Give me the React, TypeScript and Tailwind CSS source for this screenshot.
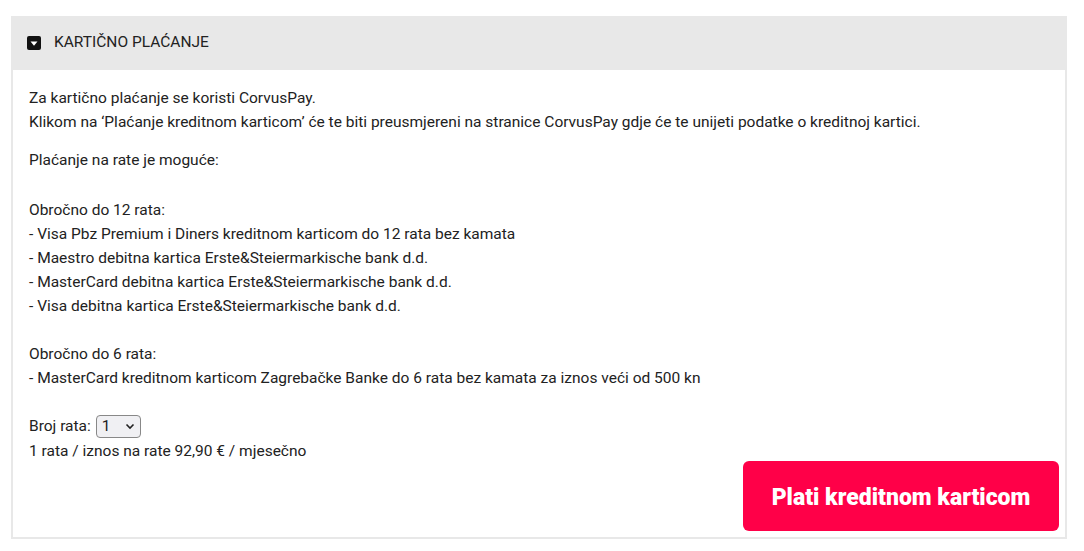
import React from "react";

export default function App() {
  return (
    <div className="w-[1084px] h-[551px] bg-white pt-4 px-[11px] text-[#222]" style={{ fontFamily: "Roboto, 'Noto Sans', sans-serif" }}>
      <div className="w-[1056px]">
        <div className="h-[54px] bg-[#e8e8e8] flex items-center pl-4">
          <div className="w-[14px] h-[14px] bg-[#111] rounded-[2px] flex items-center justify-center">
            <svg width="8" height="5" viewBox="0 0 8 5"><path d="M0.5 0.5 L7.5 0.5 L4 4.8 Z" fill="#fff" /></svg>
          </div>
          <span className="ml-[13px] text-[15.5px] uppercase text-[#222]">Kartično plaćanje</span>
        </div>
        <div className="border-2 border-t-0 border-[#e8e8e8] pl-4 pr-[6px] pt-[16px] pb-[6px] text-[15.5px] leading-[24px]">
          <p>Za kartično plaćanje se koristi CorvusPay.<br />Klikom na ‘Plaćanje kreditnom karticom’ će te biti preusmjereni na stranice CorvusPay gdje će te unijeti podatke o kreditnoj kartici.</p>
          <p className="mt-[14px]">Plaćanje na rate je moguće:</p>
          <p className="mt-[26px]">Obročno do 12 rata:<br />- Visa Pbz Premium i Diners kreditnom karticom do 12 rata bez kamata<br />- Maestro debitna kartica Erste&amp;Steiermarkische bank d.d.<br />- MasterCard debitna kartica Erste&amp;Steiermarkische bank d.d.<br />- Visa debitna kartica Erste&amp;Steiermarkische bank d.d.</p>
          <p className="mt-[24px]">Obročno do 6 rata:<br />- MasterCard kreditnom karticom Zagrebačke Banke do 6 rata bez kamata za iznos veći od 500 kn</p>
          <div className="mt-[24px] flex items-center h-[24px]">
            <span>Broj rata:</span>
            <div className="ml-[5px] w-[45px] h-[23px] border border-[#888] rounded-[4px] bg-[#f0f0f3] flex items-center justify-between px-[5px]">
              <span>1</span>
              <svg width="10" height="7" viewBox="0 0 10 7"><path d="M1.5 1.5 L5 5 L8.5 1.5" stroke="#222" strokeWidth="1.6" fill="none" /></svg>
            </div>
          </div>
          <p className="mt-[1px]">1 rata / iznos na rate 92,90 € / mjesečno</p>
          <div className="flex justify-end -mt-[2px]">
            <button className="w-[316px] h-[70px] pt-[4px] bg-[#ff0048] rounded-[6px] text-white text-[23px] font-black">Plati kreditnom karticom</button>
          </div>
        </div>
      </div>
    </div>
  );
}
